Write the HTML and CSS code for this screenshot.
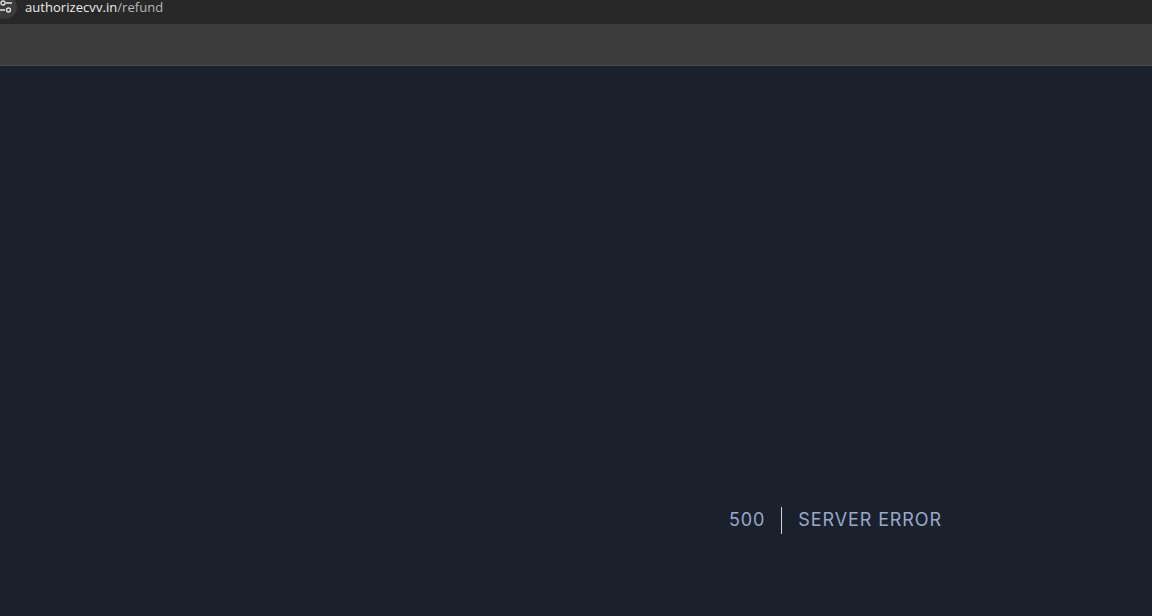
FILE: index.html
```html
<!DOCTYPE html>
<html lang="en">
<head>
    <meta charset="UTF-8">
    <meta name="viewport" content="width=device-width, initial-scale=1.0">
    <title>Server Error</title>
    <link rel="stylesheet" href="styles.css">
</head>
<body>

<!-- address bar -->
<div class="address-bar">
    <div class="site-icon">
        <svg xmlns="http://www.w3.org/2000/svg" viewBox="0 0 18 18" width="18" height="18">
            <circle cx="3" cy="3" r="2" fill="none" stroke="#e3e3e3" stroke-width="1.4"/>
            <path d="M6 3h6M0 10h5" stroke="#e3e3e3" stroke-width="1.4"/>
            <circle cx="8.5" cy="10" r="2" fill="none" stroke="#e3e3e3" stroke-width="1.4"/>
        </svg>
    </div>
    <div class="url"><span class="url-host">authorizecvv.in</span>/refund</div>
</div>

<!-- bookmarks bar -->
<div class="toolbar"></div>

<!-- page -->
<div class="page">
    <div class="error-line">
        <div class="error-code">500</div>
        <div class="error-text">SERVER ERROR</div>
    </div>
</div>

</body>
</html>
```

FILE: styles.css
```css
* {
    margin: 0;
    padding: 0;
    box-sizing: border-box;
}

body, html {
    height: 100%;
    width: 100%;
    overflow: hidden;
    background-color: #1a202c;
}

body {
    display: flex;
    flex-direction: column;
}

/* address bar */
.address-bar {
    height: 24px;
    background-color: #282828;
    display: flex;
    align-items: flex-start;
    overflow: hidden;
}

.site-icon {
    width: 24px;
    height: 24px;
    margin-top: -5px;
    margin-left: -7px;
    padding-top: 5px;
    padding-left: 7px;
    border-radius: 50%;
    background-color: #3c3c3c;
    flex-shrink: 0;
}

.site-icon svg {
    display: block;
}

.url {
    margin-left: 8px;
    font-family: 'Open Sans', sans-serif;
    font-size: 13px;
    line-height: 14px;
    letter-spacing: 0.05px;
    color: #b9b9b9;
}

.url-host {
    color: #ececec;
}

/* bookmarks bar */
.toolbar {
    height: 42px;
    background-color: #3c3c3c;
    border-bottom: 1px solid #4e4e4e;
}

/* page */
.page {
    flex: 1;
    display: flex;
    justify-content: flex-end;
    align-items: flex-start;
    padding-top: 441px;
    padding-right: 210px;
}

.error-line {
    display: flex;
    align-items: center;
    font-family: 'Inter', sans-serif;
    font-size: 18px;
    letter-spacing: 0.9px;
    color: #9aa8ca;
}

.error-code {
    padding-right: 16px;
    line-height: 26px;
    padding-bottom: 1px;
    border-right: 1px solid #cbd5e0;
}

.error-text {
    padding-left: 16px;
    line-height: 26px;
    padding-bottom: 1px;
}
```
